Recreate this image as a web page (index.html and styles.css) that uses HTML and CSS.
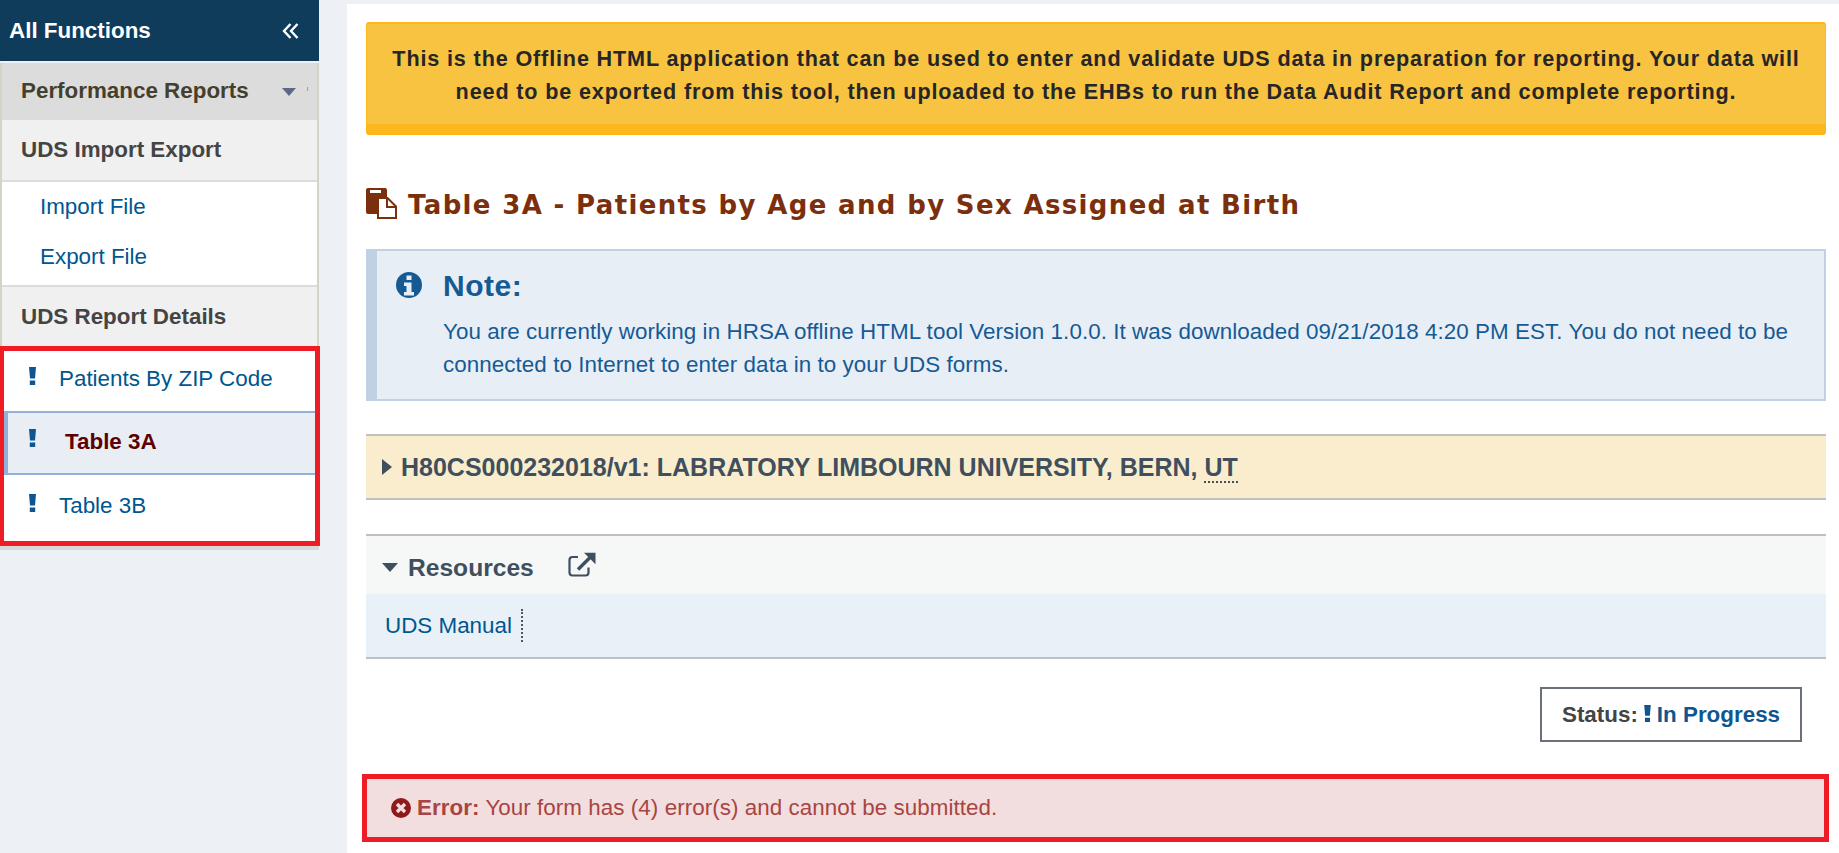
FILE: index.html
```html
<!DOCTYPE html>
<html lang="en">
<head>
<meta charset="utf-8">
<title>Table 3A</title>
<link rel="stylesheet" href="styles.css">
</head>
<body>
<div class="page">
  <aside class="sidebar">
    <div class="side-head">
      <span>All Functions</span>
      <svg class="collapse" viewBox="0 0 18 16"><path d="M8.500 1 2 8l6.500 7M15.500 1 9 8l6.500 7" fill="none" stroke="#fff" stroke-width="2.400"/></svg>
    </div>
    <div class="nav-frame">
      <div class="nav-top"><span>Performance Reports</span><i class="caret"></i><i class="tick"></i></div>
      <div class="nav-section">UDS Import Export</div>
      <div class="nav-links">
        <a>Import File</a>
        <a>Export File</a>
      </div>
      <div class="nav-section last">UDS Report Details</div>
    </div>
    <div class="nav-marked">
      <div class="mark-row">
        <svg class="bang" viewBox="0 0 7 18"><path d="M0 0h7L6 11.500H1zM.8 13.500h5.400V18H.8z"/></svg>
        <a>Patients By ZIP Code</a>
      </div>
      <div class="mark-row active">
        <svg class="bang" viewBox="0 0 7 18"><path d="M0 0h7L6 11.500H1zM.8 13.500h5.400V18H.8z"/></svg>
        <a>Table 3A</a>
      </div>
      <div class="mark-row tall">
        <svg class="bang" viewBox="0 0 7 18"><path d="M0 0h7L6 11.500H1zM.8 13.500h5.400V18H.8z"/></svg>
        <a>Table 3B</a>
      </div>
    </div>
  </aside>
  <main class="main">
    <div class="banner">This is the Offline HTML application that can be used to enter and validate UDS data in preparation for reporting. Your data will need to be exported from this tool, then uploaded to the EHBs to run the Data Audit Report and complete reporting.</div>
    <h1 class="title">
      <svg class="title-icon" viewBox="0 0 31 31"><path fill="#7b2f0c" d="M2 0h17q2 0 2 2v7h-9.500v17H2q-2 0-2-2V2q0-2 2-2z"/><path fill="#fff" d="M4 2h11v3H4z"/><path fill="#fff" stroke="#7b2f0c" stroke-width="2" d="M12 10h9.500l8.500 8.500V30H12z"/><path fill="none" stroke="#7b2f0c" stroke-width="2" d="M21 10v9h9"/></svg>
      <span>Table 3A - Patients by Age and by Sex Assigned at Birth</span>
    </h1>
    <section class="note">
      <svg class="note-icon" viewBox="0 0 26 26"><circle cx="13" cy="13" r="13" fill="#165a94"/><path fill="#e7eef6" d="M10.500 3.500h5v4.500h-5zM8 10.500h7.500v9.500h2.500v3.500H8V20h2.500v-6H8z"/></svg>
      <div class="note-body">
        <h2>Note:</h2>
        <p>You are currently working in HRSA offline HTML tool Version 1.0.0. It was downloaded 09/21/2018 4:20 PM EST. You do not need to be connected to Internet to enter data in to your UDS forms.</p>
      </div>
    </section>
    <div class="org"><i class="tri-right"></i><span>H80CS000232018/v1: LABRATORY LIMBOURN UNIVERSITY, BERN, <abbr>UT</abbr></span></div>
    <section class="resources">
      <div class="res-head">
        <i class="tri-down"></i><span>Resources</span>
        <svg class="ext" viewBox="0 0 28 25"><path fill="none" stroke="#3f4f5e" stroke-width="2.200" stroke-linejoin="round" d="M20.500 15.500v5q0 3-3 3H4.500q-3 0-3-3V8q0-3 3-3H10"/><path fill="none" stroke="#3f4f5e" stroke-width="3.400" d="M10 17.500 22.500 5"/><path fill="#3f4f5e" d="M16 .8h11.500v11.500z"/></svg>
      </div>
      <div class="res-body"><a>UDS Manual</a></div>
    </section>
    <div class="status-row">
      <div class="status">Status: <svg class="bang small" viewBox="0 0 7 18"><path d="M0 0h7L6 11.500H1zM.8 13.500h5.400V18H.8z"/></svg> <span>In Progress</span></div>
    </div>
    <div class="error">
      <svg class="err-icon" viewBox="0 0 20 20"><circle cx="10" cy="10" r="10" fill="#8f1a1c"/><path stroke="#f2dede" stroke-width="3.400" d="M6 6l8 8M14 6l-8 8"/></svg>
      <span><b>Error:</b> Your form has (4) error(s) and cannot be submitted.</span>
    </div>
  </main>
</div>
</body>
</html>
```
FILE: styles.css
```css
* { box-sizing: border-box; }
html, body { margin: 0; height: 100%; }
body { background: #edf0f4; font-family: "Liberation Sans", Arial, sans-serif; overflow: hidden; }
.page { display: flex; align-items: flex-start; gap: 28px; height: 853px; }

.sidebar { width: 319px; flex: none; box-shadow: 0 4px 0 #d8d8d8; }
.side-head { height: 61px; background: #0f3c5b; color: #fff; font-weight: 700; font-size: 22.400px; display: flex; align-items: center; justify-content: space-between; padding: 0 19px 0 9px; }
.collapse { width: 18px; height: 16px; }
.nav-frame { margin-top: 2px; border-left: 2px solid #d4d4c2; border-right: 2px solid #d4d4c2; }
.nav-top { height: 57px; background: #dcdcdc; color: #453f2e; font-weight: 700; font-size: 22.400px; display: flex; align-items: center; padding: 0 0 2px 19px; position: relative; }
.caret { position: absolute; left: 280px; top: 25px; border: 7px solid transparent; border-top: 8px solid #5a6a85; border-bottom: 0; }
.tick { position: absolute; left: 305px; top: 24px; width: 1px; height: 4px; background: #9aa0a8; }
.nav-section { height: 62px; background: #f0f0f0; color: #444; font-weight: 700; font-size: 22.400px; display: flex; align-items: center; padding-left: 19px; border-bottom: 2px solid #dcdcdc; }
.nav-section.last { border-bottom: 0; height: 61px; border-top: 2px solid #dcdcdc; }
.nav-links { background: #fff; display: flex; flex-direction: column; height: 103px; }
.nav-links a { height: 50px; line-height: 50px; padding-left: 38px; color: #00568f; font-size: 22.400px; }
.nav-marked { width: 320px; height: 200px; border: 5px solid #ee1c25; border-left-width: 4px; background: #fff; position: relative; }
.mark-row { display: flex; height: 60px; align-items: center; font-size: 22.400px; color: #00568f; padding: 0 0 4px 25px; gap: 23px; }
.mark-row .bang { margin-bottom: 6px; }
.mark-row.active { height: 64px; background: #e9eef4; border: 2px solid #92b0d8; border-left-width: 4px; border-right: 0; padding: 0 0 2px 21px; color: #5f0000; font-weight: 700; gap: 29px; }
.mark-row.active .bang { margin-bottom: 8px; }
.mark-row.tall { height: 66px; }
.bang { width: 7px; height: 18px; fill: #0f5690; flex: none; }
.bang.small { height: 17px; margin-top: -2px; }

.main { flex: 1; margin-top: 4px; height: 849px; background: #fff; padding: 18px 13px 0 19px; display: flex; flex-direction: column; }
.banner { height: 113px; background: #f7c340; border-top: 2px solid #fdb61c; border-bottom: 11px solid #fdb61c; border-left: 1px solid #fdb61c; border-right: 1px solid #fdb61c; border-radius: 3px; color: #262626; font-weight: 700; font-size: 21.600px; letter-spacing: .855px; line-height: 33px; text-align: center; padding: 18px 20px 0; }
.title { margin: 53px 0 0; height: 31px; display: flex; align-items: center; gap: 11px; color: #7b2f0c; font-family: "DejaVu Sans", sans-serif; font-size: 26px; font-weight: 700; letter-spacing: 1.350px; }
.title span { padding-top: 2px; }
.title-icon { width: 31px; height: 31px; flex: none; }
.note { margin-top: 30px; height: 152px; background: #e7eef6; border: 2px solid #c0d1e3; border-left-width: 11px; display: flex; padding: 21px 0 0 19px; gap: 21px; color: #165a94; }
.note-icon { width: 26px; height: 26px; flex: none; }
.note-body h2 { margin: -3px 0 0; font-size: 30px; line-height: 34px; font-weight: 700; letter-spacing: .5px; }
.note-body p { margin: 12px 0 0; font-size: 22.400px; line-height: 33px; letter-spacing: .06px; }
.org { margin-top: 33px; height: 66px; background: #f9edcd; border-top: 2px solid #c0c0c0; border-bottom: 2px solid #c0c0c0; display: flex; align-items: center; padding-left: 16px; gap: 9px; color: #3f4f5e; font-weight: 700; font-size: 25px; }
abbr { border-bottom: 2px dotted #3f4f5e; }
.tri-right { border: 8px solid transparent; border-left: 10px solid #3f4f5e; border-right: 0; }
.tri-down { border: 8px solid transparent; border-top: 9px solid #3f4f5e; border-bottom: 0; }
.resources { margin-top: 34px; border-top: 2px solid #c0c0c0; border-bottom: 2px solid #c0c0c0; }
.res-head { height: 58px; background: #f6f8f8; display: flex; align-items: center; padding: 5px 0 0 16px; color: #3f4f5e; font-weight: 700; font-size: 24.600px; }
.res-head span { margin-left: 10px; }
.ext { width: 28px; height: 25px; margin: -7px 0 0 34px; }
.res-body { height: 63px; background: #e9f1f8; padding: 15px 0 0 19px; }
.res-body a { display: inline-block; height: 33px; line-height: 33px; color: #00568f; font-size: 22.400px; padding-right: 9px; border-right: 2px dotted #555; }
.status-row { margin-top: 28px; display: flex; justify-content: flex-end; padding-right: 24px; }
.status { width: 262px; height: 55px; border: 2px solid #6b7178; display: flex; align-items: center; justify-content: center; gap: 6px; color: #444; font-weight: 700; font-size: 22.400px; }
.status span { color: #0f5690; }
.error { margin: 32px -3px 0 -4px; height: 68px; background: #f2dede; border: 5px solid #ee1c25; display: flex; align-items: center; padding-left: 24px; color: #a94442; font-size: 22.400px; letter-spacing: .05px; }
.err-icon { width: 20px; height: 20px; margin-right: 6px; flex: none; }
```
